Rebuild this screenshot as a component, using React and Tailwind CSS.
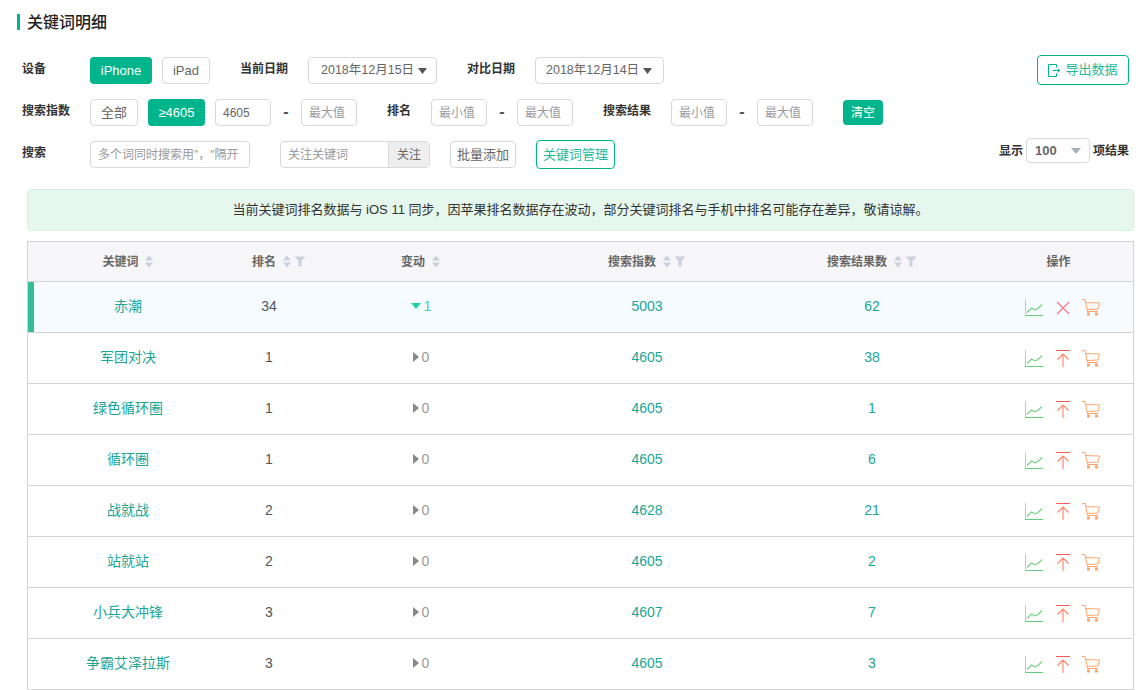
import { Fragment } from 'react'

const ROWS = [
  { name: '赤潮', rank: 34, change: 1, index: 5003, results: 62, active: true },
  { name: '军团对决', rank: 1, change: 0, index: 4605, results: 38 },
  { name: '绿色循环圈', rank: 1, change: 0, index: 4605, results: 1 },
  { name: '循环圈', rank: 1, change: 0, index: 4605, results: 6 },
  { name: '战就战', rank: 2, change: 0, index: 4628, results: 21 },
  { name: '站就站', rank: 2, change: 0, index: 4605, results: 2 },
  { name: '小兵大冲锋', rank: 3, change: 0, index: 4607, results: 7 },
  { name: '争霸艾泽拉斯', rank: 3, change: 0, index: 4605, results: 3 },
]

const btn = 'h-[27px] flex items-center justify-center rounded border border-[#d9d9d9] text-[13px] text-[#666] bg-white'
const btnOn = 'h-[27px] flex items-center justify-center rounded bg-[#00b48b] text-[13px] text-white'
const date = 'h-[27px] w-[129px] flex items-center gap-[4px] rounded border border-[#d9d9d9] text-[12.5px] text-[#666] bg-white'
const range = 'h-[27px] w-[56px] flex items-center pl-[7px] rounded border border-[#d9d9d9] text-[12px] text-[#999] bg-white'
const label = 'pb-[3px] text-[12px] font-bold text-[#333]'
const dash = 'w-[30px] pb-[1px] text-center font-bold text-[#555]'

function Sort() {
  return (
    <svg width="10" height="13" viewBox="0 0 10 13" className="shrink-0">
      <path d="M5 0.5 L9 5.5 H1 Z M5 12.5 L1 7.5 H9 Z" fill="#cbd1dc" />
    </svg>
  )
}

function Funnel() {
  return (
    <svg width="12" height="11" viewBox="0 0 12 11" className="shrink-0">
      <path d="M0.5 0.5 H11.5 L7.5 5 V10.5 H4.5 V5 Z" fill="#cbd1dc" />
    </svg>
  )
}

function Caret() {
  return (
    <svg width="9" height="6" viewBox="0 0 9 6" className="shrink-0">
      <path d="M0 0 H9 L4.5 6 Z" fill="#555" />
    </svg>
  )
}

function ChartIcon() {
  return (
    <svg width="18" height="17" viewBox="0 0 18 17" fill="none">
      <path d="M0.5 0 V16" stroke="#a8dcb0" />
      <path d="M0 16.5 H18" stroke="#62d07a" />
      <path d="M2 13.5 L6.5 9 L10 11 L13 9.5 L17 5.5" stroke="#6fd080" strokeWidth="1.1" />
    </svg>
  )
}

function CloseIcon() {
  return (
    <svg width="14" height="14" viewBox="0 0 14 14" fill="none">
      <path d="M1 1 L13 13 M13 1 L1 13" stroke="#ff6f7d" strokeWidth="1.1" />
    </svg>
  )
}

function TopIcon() {
  return (
    <svg width="14" height="17" viewBox="0 0 14 17" fill="none">
      <path d="M0 0.5 H14" stroke="#ff5a5a" />
      <path d="M7 17 V4 M1.5 9.5 L7 4 L12.5 9.5" stroke="#ff8068" strokeWidth="1.1" />
    </svg>
  )
}

function CartIcon() {
  return (
    <svg width="18" height="17" viewBox="0 0 18 17" fill="none" stroke="#ffa56b">
      <path d="M0 0.5 H3 L5.5 12.5 H16" />
      <path d="M3.5 3.5 L17.5 4 L16 10 L5 10.5" />
      <rect x="5.5" y="14" width="2" height="2" fill="#ffa56b" />
      <rect x="13.5" y="14" width="2" height="2" fill="#ffa56b" />
    </svg>
  )
}

const COLS = 'grid grid-cols-[200px_82px_222px_230px_220px_1fr]'

export default function App() {
  return (
    <div className="w-[1142px] h-[690px] overflow-hidden bg-white text-[#333]" style={{ fontFamily: '"Liberation Sans", "Noto Sans CJK SC", sans-serif' }}>
      <div className="pl-[17px] pt-[14px] h-[57px]">
        <h1 className="h-[16px] border-l-[3px] border-[#00b48b] pl-[7px] text-[16px] leading-[18px] font-medium text-[#222]">关键词明细</h1>
      </div>

      <div className="relative pl-[22px] h-[27px] flex items-center">
        <span className={`${label} w-[68px]`}>设备</span>
        <div className={`${btnOn} w-[62px]`}>iPhone</div>
        <div className={`${btn} w-[48px] ml-[10px]`}>iPad</div>
        <span className={`${label} ml-[30px] w-[68px]`}>当前日期</span>
        <div className={`${date} pl-[12px]`}>2018年12月15日<Caret /></div>
        <span className={`${label} ml-[30px] w-[68px]`}>对比日期</span>
        <div className={`${date} pl-[10px]`}>2018年12月14日<Caret /></div>
        <div className="absolute right-[13px] top-[-2px] h-[30px] w-[92px] flex items-center justify-center gap-[5px] rounded border border-[#00b48b] text-[13px] text-[#1fb896]">
          <svg width="12" height="13" viewBox="0 0 12 13" fill="none" stroke="#00b48b">
            <path d="M8.5 3.5 V0.5 H0.5 V12.5 H8.5 V9.5 M4.5 6.5 H11.5 M9.5 4.5 L11.5 6.5 L9.5 8.5" />
          </svg>
          导出数据
        </div>
      </div>

      <div className="mt-[15px] pl-[22px] h-[27px] flex items-center">
        <span className={`${label} w-[68px]`}>搜索指数</span>
        <div className={`${btn} w-[48px]`}>全部</div>
        <div className={`${btnOn} w-[57px] ml-[10px]`}>≥4605</div>
        <div className="h-[27px] w-[56px] ml-[10px] flex items-center pl-[7px] rounded border border-[#d9d9d9] text-[12px] text-[#666] bg-white">4605</div>
        <span className={dash}>-</span>
        <div className={range}>最大值</div>
        <span className={`${label} ml-[30px] w-[44px]`}>排名</span>
        <div className={range}>最小值</div>
        <span className={dash}>-</span>
        <div className={range}>最大值</div>
        <span className={`${label} ml-[30px] w-[68px]`}>搜索结果</span>
        <div className={range}>最小值</div>
        <span className={dash}>-</span>
        <div className={range}>最大值</div>
        <div className="ml-[30px] h-[25px] w-[40px] flex items-center justify-center rounded bg-[#00b48b] text-[12px] text-white">清空</div>
      </div>

      <div className="relative mt-[15px] pl-[22px] h-[27px] flex items-center">
        <span className={`${label} w-[68px]`}>搜索</span>
        <div className="h-[27px] w-[160px] flex items-center pl-[7px] rounded border border-[#d9d9d9] text-[12px] text-[#999] whitespace-nowrap overflow-hidden">多个词同时搜索用"，"隔开</div>
        <div className="ml-[30px] h-[27px] w-[150px] flex rounded border border-[#d9d9d9] text-[12px]">
          <span className="flex-1 flex items-center pl-[7px] text-[#999]">关注关键词</span>
          <span className="w-[41px] flex items-center justify-center bg-[#eee] border-l border-[#d9d9d9] text-[#666]">关注</span>
        </div>
        <div className={`${btn} ml-[20px] w-[66px]`}>批量添加</div>
        <div className="ml-[20px] h-[29px] w-[79px] flex items-center justify-center rounded border border-[#00b48b] text-[13px] text-[#1fb896]">关键词管理</div>
        <div className="absolute right-[13px] top-[-3px] h-[25px] flex items-center gap-[3px] text-[12px] font-bold">
          <span>显示</span>
          <div className="w-[64px] h-[25px] flex items-center justify-between pl-[8px] pr-[8px] rounded border border-[#d9d9d9] text-[13px] font-bold text-[#666]">
            100
            <svg width="10" height="6" viewBox="0 0 10 6"><path d="M0 0 H10 L5 6 Z" fill="#a9b0bf" /></svg>
          </div>
          <span>项结果</span>
        </div>
      </div>

      <div className="mt-[21px] ml-[27px] w-[1107px] h-[42px] flex items-center justify-center rounded border border-[#d4f0e0] bg-[#e6f8ee] text-[13px] text-[#333]">
        当前关键词排名数据与 iOS 11 同步，因苹果排名数据存在波动，部分关键词排名与手机中排名可能存在差异，敬请谅解。
      </div>

      <div className="mt-[10px] ml-[27px] w-[1107px] border border-[#d4d4d4]">
        <div className={`${COLS} h-[39px] items-center bg-[#f6f6f8] text-[12px] font-bold text-[#666] text-center`}>
          <div className="flex items-center justify-center gap-[5px]">关键词<Sort /></div>
          <div className="flex items-center justify-center gap-[2px] pl-[20px]"><span className="mr-[4px]">排名</span><Sort /><Funnel /></div>
          <div className="flex items-center justify-center gap-[6px]">变动<Sort /></div>
          <div className="flex items-center justify-center gap-[2px]"><span className="mr-[4px]">搜索指数</span><Sort /><Funnel /></div>
          <div className="flex items-center justify-center gap-[2px]"><span className="mr-[4px]">搜索结果数</span><Sort /><Funnel /></div>
          <div className="pl-[2px]">操作</div>
        </div>
        {ROWS.map((r) => (
          <div key={r.name} className={`${COLS} relative h-[51px] pb-[2px] items-center border-t border-[#d4d4d4] text-[14px] text-center ${r.active ? 'bg-[#f5fbff]' : 'bg-white'}`}>
            {r.active && <div className="absolute left-0 top-0 bottom-0 w-[6px] bg-[#34bd96]" />}
            <div className="text-[#1aa595]">{r.name}</div>
            <div className="text-[#555]">{r.rank}</div>
            <div className="flex items-center justify-center gap-[3px]">
              {r.change ? (
                <Fragment>
                  <svg width="10" height="6" viewBox="0 0 10 6"><path d="M0 0 H10 L5 6 Z" fill="#1ccfa5" /></svg>
                  <span className="text-[#46cfae]">{r.change}</span>
                </Fragment>
              ) : (
                <Fragment>
                  <svg width="6" height="10" viewBox="0 0 6 10"><path d="M0 0 L6 5 L0 10 Z" fill="#888" /></svg>
                  <span className="text-[#999]">{r.change}</span>
                </Fragment>
              )}
            </div>
            <div className="text-[#1aa595]">{r.index}</div>
            <div className="text-[#1aa595]">{r.results}</div>
            <div className="flex items-center pl-[43px] pt-[3px]">
              <ChartIcon />
              <div className="ml-[13px] mr-[12px] w-[14px] flex justify-center">
                {r.active ? <CloseIcon /> : <TopIcon />}
              </div>
              <CartIcon />
            </div>
          </div>
        ))}
      </div>
    </div>
  )
}
